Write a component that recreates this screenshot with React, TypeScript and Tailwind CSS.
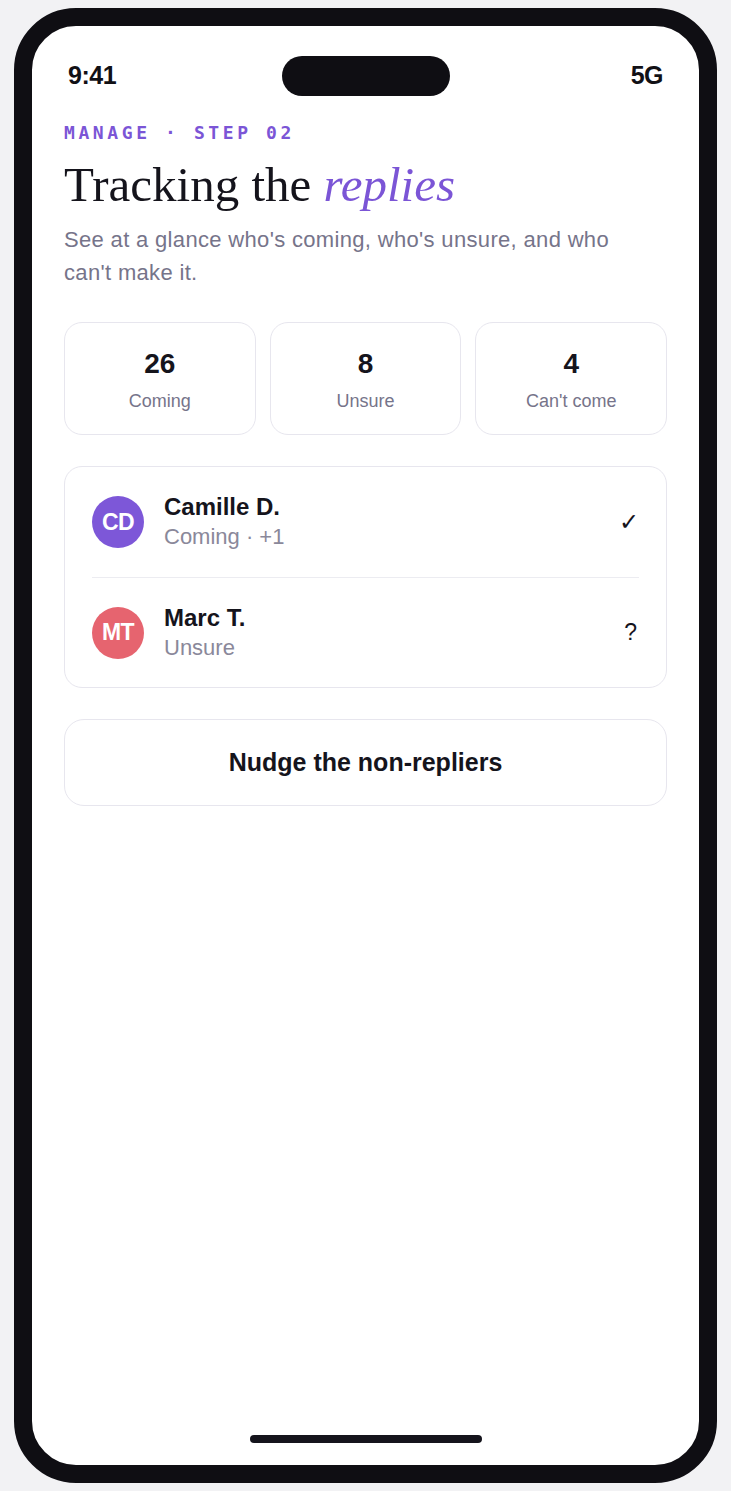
const stats = [
  { value: "26", label: "Coming" },
  { value: "8", label: "Unsure" },
  { value: "4", label: "Can't come" },
];

const guests = [
  { initials: "CD", name: "Camille D.", status: "Coming · +1", mark: "✓", color: "bg-[#7d57d8]" },
  { initials: "MT", name: "Marc T.", status: "Unsure", mark: "?", color: "bg-[#e6646f]" },
];

const sans = "font-['Liberation_Sans',Arial,sans-serif]";

export default function App() {
  return (
    <div className="min-h-screen bg-[#f2f2f4] pt-[8px] pl-[14px]">
      <div className="w-[703px] h-[1475px] rounded-[62px] border-[18px] border-[#0f0e13] bg-white overflow-hidden">
        <div className={`flex flex-col h-full ${sans}`}>
          {/* Status bar */}
          <div className="flex items-center px-[36px] pt-[30px] h-[70px]">
            <div className="flex-1 text-[25px] font-bold tracking-[-0.02em] text-[#111015]">9:41</div>
            <div className="w-[168px] h-[40px] rounded-full bg-[#0f0e13]" />
            <div className="flex-1 text-right text-[25px] font-bold tracking-[-0.02em] text-[#111015]">5G</div>
          </div>

          <div className="flex flex-col flex-1 px-[32px]">
            <p className="mt-[25px] text-[18px] leading-[24px] font-bold tracking-[0.2em] text-[#7b55d6] font-['DejaVu_Sans_Mono',monospace]">
              MANAGE · STEP 02
            </p>
            <h1 className="mt-[12px] text-[49px] leading-[56px] text-[#15141c] font-['Liberation_Serif','Times_New_Roman',serif]">
              Tracking the <em className="italic text-[#7b55d6]">replies</em>
            </h1>
            <p className="mt-[10px] max-w-[580px] text-[22px] leading-[33px] tracking-[0.015em] text-[#76748a]">
              See at a glance who's coming, who's unsure, and who can't make it.
            </p>

            {/* Stats */}
            <div className="mt-[33px] grid grid-cols-3 gap-[14px]">
              {stats.map((s) => (
                <div
                  key={s.label}
                  className="h-[113px] pt-[2px] rounded-[18px] border border-[#e7e6ee] flex flex-col items-center justify-center"
                >
                  <div className="text-[28px] leading-[34px] font-bold text-[#15141c]">{s.value}</div>
                  <div className="mt-[8px] text-[18px] leading-[24px] text-[#76748a]">{s.label}</div>
                </div>
              ))}
            </div>

            {/* Guests */}
            <div className="mt-[31px] rounded-[18px] border border-[#e7e6ee] px-[27px]">
              {guests.map((g, i) => (
                <div
                  key={g.name}
                  className={`flex items-center h-[110px] ${i > 0 ? "border-t border-[#ececf1]" : ""}`}
                >
                  <div
                    className={`w-[52px] h-[52px] rounded-full ${g.color} flex items-center justify-center text-white text-[23px] font-bold tracking-[-0.03em]`}
                  >
                    {g.initials}
                  </div>
                  <div className="ml-[20px] flex-1">
                    <div className="text-[24px] leading-[28px] font-bold text-[#15141c]">{g.name}</div>
                    <div className="mt-[2px] text-[22px] leading-[28px] text-[#8a889a]">{g.status}</div>
                  </div>
                  {g.mark === "✓" ? (
                    <div className="text-[24px] font-bold text-[#15141c] font-['DejaVu_Sans',sans-serif]">{g.mark}</div>
                  ) : (
                    <div className="pr-[2px] text-[23px] text-[#15141c]">{g.mark}</div>
                  )}
                </div>
              ))}
            </div>

            {/* Action */}
            <button className="mt-[31px] h-[87px] rounded-[20px] border border-[#e7e6ee] text-[25px] font-bold text-[#15141c]">
              Nudge the non-repliers
            </button>

            <div className="flex-1" />
            <div className="flex justify-center pb-[22px]">
              <div className="w-[232px] h-[8px] rounded-full bg-[#15141c]" />
            </div>
          </div>
        </div>
      </div>
    </div>
  );
}
